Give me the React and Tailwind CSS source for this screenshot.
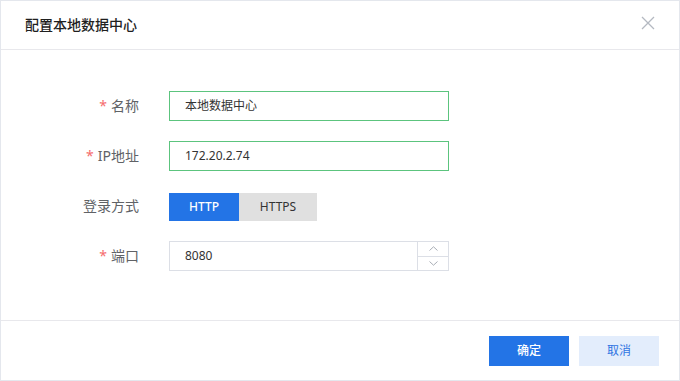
import React from "react";

const font = { fontFamily: '"Noto Sans", "Noto Sans CJK SC", sans-serif' };

function Label({ required, children }) {
  return (
    <div className="w-[138px] shrink-0 text-right text-[14px] text-[#606266] leading-[30px]">
      {required && <span className="text-[#f56c6c] mr-[4px]">*</span>}
      {children}
    </div>
  );
}

export default function App() {
  return (
    <div className="w-[680px] h-[381px] bg-white" style={font}>
      <div className="w-full h-full border border-[#e4e7ed] flex flex-col">
        <div className="h-[49px] shrink-0 flex items-center justify-between pl-[24px] pr-[24px] border-b border-[#e8e8ec]">
          <span className="text-[14px] font-medium text-[#1f1f1f] mt-[-1px]">配置本地数据中心</span>
          <svg width="14" height="14" viewBox="0 0 14 14" className="mt-[-4px]">
            <path d="M1 1 L13 13 M13 1 L1 13" stroke="#b4b9c1" strokeWidth="1.3" fill="none" />
          </svg>
        </div>
        <div className="flex-1 flex flex-col gap-[20px] pt-[41px]">
          <div className="flex items-center h-[30px]">
            <Label required>名称</Label>
            <div className="ml-[30px] w-[280px] h-[30px] border border-[#5cc47e] flex items-center pl-[15px] text-[12px] text-[#333]">
              本地数据中心
            </div>
          </div>
          <div className="flex items-center h-[30px]">
            <Label required>IP地址</Label>
            <div className="ml-[30px] w-[280px] h-[30px] border border-[#5cc47e] flex items-center pl-[15px] text-[12px] text-[#333]">
              172.20.2.74
            </div>
          </div>
          <div className="flex items-center h-[30px]">
            <Label>登录方式</Label>
            <div className="ml-[30px] flex h-[28px] mt-[2px] text-[12px]">
              <div className="w-[70px] bg-[#2374e6] text-white flex items-center justify-center font-medium">HTTP</div>
              <div className="w-[78px] bg-[#e0e0e0] text-[#333] flex items-center justify-center">HTTPS</div>
            </div>
          </div>
          <div className="flex items-center h-[30px]">
            <Label required>端口</Label>
            <div className="ml-[30px] w-[280px] h-[30px] border border-[#dcdfe6] flex text-[12px] text-[#333]">
              <div className="flex-1 flex items-center pl-[15px]">8080</div>
              <div className="w-[31px] border-l border-[#dcdfe6] flex flex-col">
                <div className="flex-1 flex items-center justify-center border-b border-[#dcdfe6]">
                  <svg width="9" height="5" viewBox="0 0 9 5">
                    <path d="M0.5 4.5 L4.5 0.8 L8.5 4.5" stroke="#a8adb5" strokeWidth="1" fill="none" />
                  </svg>
                </div>
                <div className="flex-1 flex items-center justify-center">
                  <svg width="9" height="5" viewBox="0 0 9 5">
                    <path d="M0.5 0.5 L4.5 4.2 L8.5 0.5" stroke="#a8adb5" strokeWidth="1" fill="none" />
                  </svg>
                </div>
              </div>
            </div>
          </div>
        </div>
        <div className="h-[60px] shrink-0 border-t border-[#e8e8ec] flex items-center justify-end gap-[10px] pr-[20px] pt-[1px]">
          <button className="w-[80px] h-[30px] bg-[#2374e6] text-white text-[12px] font-medium">确定</button>
          <button className="w-[80px] h-[30px] bg-[#e3edfc] text-[#2f74e2] text-[12px]">取消</button>
        </div>
      </div>
    </div>
  );
}
